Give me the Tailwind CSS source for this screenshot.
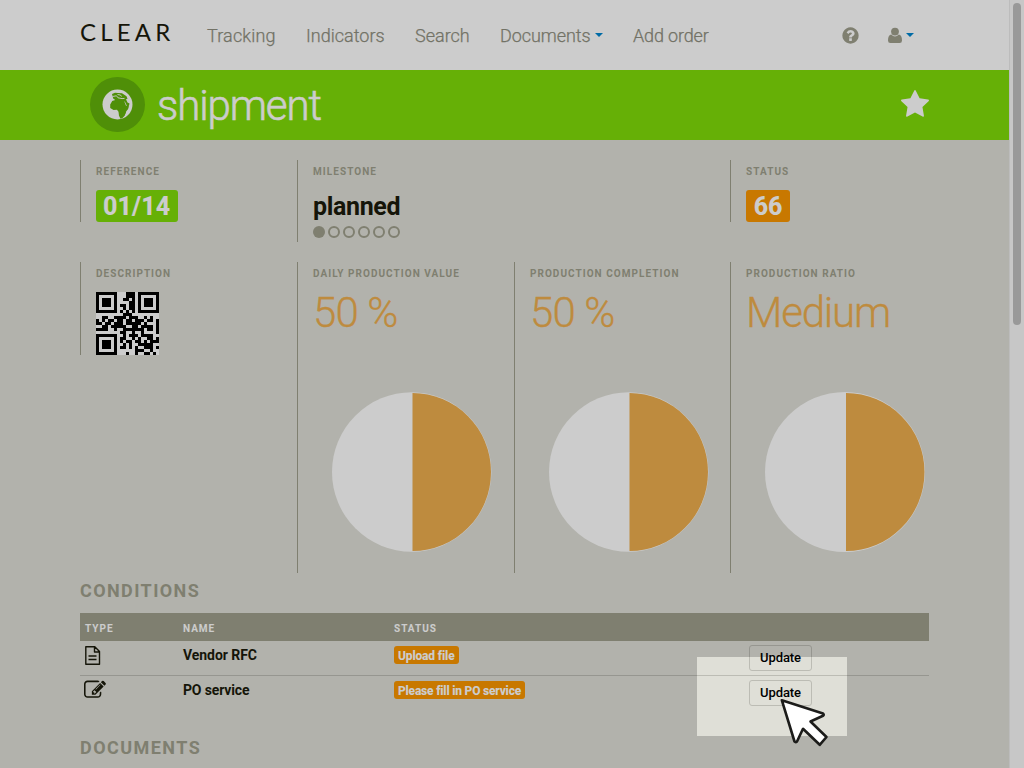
<!DOCTYPE html>
<html lang="en">
<head>
<meta charset="utf-8">
<title>CLEAR - shipment</title>
<script src="https://cdn.jsdelivr.net/npm/@tailwindcss/browser@4"></script>
</head>
<body class="relative h-[768px] w-[1024px] overflow-hidden bg-[#dfdfd7] font-['Roboto',sans-serif] text-[#1b1b0c]">
<div class="flex h-full">
<div class="w-[1009px] overflow-hidden">
  <nav class="flex h-[70px] bg-white pl-20 text-[18px] leading-[22px] font-light text-[#8f8f80] [-webkit-text-stroke:.25px]">
    <div class="w-[127px] pt-[17px] font-['Lato'] text-[24px] leading-[30px] font-normal tracking-[4.2px] text-[#1b1b0c] [-webkit-text-stroke:0]">CLEAR</div>
    <a class="w-[99px] pt-[25px] tracking-[.15px]">Tracking</a>
    <a class="w-[109px] pt-[25px]">Indicators</a>
    <a class="w-[85px] pt-[25px]">Search</a>
    <a class="flex w-[133px] gap-1 pt-[25px] tracking-[-.05px]">Documents<svg class="mt-2 h-1 w-2 fill-[#0086d0]" viewBox="0 0 8 4"><path d="M0 0h8L4 4z"/></svg></a>
    <a class="w-[208px] pt-[25px] tracking-[-.15px]">Add order</a>
    <svg class="mt-[26px] h-[19px] w-[19px] fill-[#9f9f8d]" viewBox="0 0 1792 1792"><path d="M1024 1376v-192q0-14-9-23t-23-9h-192q-14 0-23 9t-9 23v192q0 14 9 23t23 9h192q14 0 23-9t9-23zm256-672q0-88-55.500-163t-138.500-116-170-41q-243 0-371 213-15 24 8 42l132 100q7 6 19 6 16 0 25-12 53-68 86-92 34-24 86-24 48 0 85.500 26t37.500 59q0 38-20 61t-68 45q-63 28-115.500 86.500t-52.500 125.500v36q0 14 9 23t23 9h192q14 0 23-9t9-23q0-19 21.500-49.500t54.500-49.500q32-18 49-28.500t46-35 44.500-48 28-60.500 12.500-81zm384 192q0 209-103 385.500t-279.500 279.500-385.500 103-385.500-103-279.500-279.500-103-385.500 103-385.500 279.500-279.500 385.500-103 385.500 103 279.500 279.500 103 385.500z"/></svg>
    <svg class="mt-[27px] ml-7 h-4 w-[14px] fill-[#9f9f8d]" viewBox="0 0 14 16"><circle cx="7" cy="4.600" r="3.900"/><path d="M3.300 7.500Q5 9.400 7 9.400t3.700-1.900Q14 8 14 13.500q0 2.500-2.400 2.500H2.400Q0 16 0 13.500 0 8 3.300 7.500z"/></svg>
    <svg class="mt-[33px] ml-1 h-1 w-2 fill-[#0086d0]" viewBox="0 0 8 4"><path d="M0 0h8L4 4z"/></svg>
  </nav>
  <header class="flex h-[70px] bg-[#80dd08] pl-[90px] text-white">
    <div class="mt-[7px] flex h-[55px] w-[55px] items-center justify-center rounded-full bg-[#63b30a]">
      <svg class="h-[31px] w-[31px]" viewBox="0 0 31 31"><circle cx="15.500" cy="15.500" r="15" fill="#fff"/><path fill="#63b30a" d="M10 5 13 3.800l3 .2 4 .3 4.500 3 1 2.500-1.500.4 1.500 3.300 2 1-.5 2-1.500 1.800-2-4.500-1.500-2 2 5 3 .5-1 3-2.500 2.700-.5 3.300-2.500 2.700-2 .8-1.500-3-.5-4-1.500-2-3.500.3-3.300-2 0-3.500 2-3.700 3-1-2-1.500z"/><path fill="#63b30a" d="m22.800 22.500 1.700-1.500-.8 3.500-1.500.7z"/><path fill="none" stroke="#fff" stroke-width=".9" d="m10.500 7.500 4-.7 1.500 2 4 .8 2.500-.2M15.500 5.500l3 .5 1 1.500"/></svg>
    </div>
    <h1 class="ml-3 w-[744px] pt-[11px] text-[42px] leading-[49px] font-light tracking-[-1.1px] [-webkit-text-stroke:.6px]">shipment</h1>
    <svg class="mt-5 h-[28px] w-[28px] fill-white" viewBox="64 32 1664 1664"><path d="M1728 647q0 22-26 48l-363 354 86 500q1 7 1 20 0 21-10.500 35.500t-30.500 14.500q-19 0-40-12l-449-236-449 236q-22 12-40 12-21 0-31.500-14.500t-10.500-35.500q0-6 2-20l86-500-364-354q-25-27-25-48 0-37 56-46l502-73 225-455q19-41 49-41t49 41l225 455 502 73q56 9 56 46z"/></svg>
  </header>
  <main class="pl-20">
    <section class="mt-5 grid h-[102px] grid-cols-[217px_433px_200px] items-start text-[10px] leading-3 font-bold tracking-[1.06px] text-[#9f9f8d]">
      <div class="h-[62px] border-l border-[#9f9f8d] pt-[6px] pl-[15px]">REFERENCE
        <div class="mt-[12px] h-8 w-[82px] rounded-[3px] bg-[#80dd08] pl-[7px] text-[25px] leading-[34px] font-extrabold tracking-[.1px] text-white">01/14</div></div>
      <div class="h-[82px] border-l border-[#9f9f8d] pt-[6px] pl-[15px]">MILESTONE
        <div class="mt-[14px] text-[25px] leading-[30px] tracking-[-.35px] text-[#1b1b0c]">planned</div>
        <div class="mt-1 flex gap-[3px]"><i class="h-3 w-3 rounded-full bg-[#9f9f8d]"></i><i class="h-3 w-3 rounded-full border-2 border-[#9f9f8d]"></i><i class="h-3 w-3 rounded-full border-2 border-[#9f9f8d]"></i><i class="h-3 w-3 rounded-full border-2 border-[#9f9f8d]"></i><i class="h-3 w-3 rounded-full border-2 border-[#9f9f8d]"></i><i class="h-3 w-3 rounded-full border-2 border-[#9f9f8d]"></i></div></div>
      <div class="h-[62px] border-l border-[#9f9f8d] pt-[6px] pl-[15px]">STATUS
        <div class="mt-[12px] h-8 w-11 rounded-[3px] bg-[#fa9600] text-center text-[25px] leading-[34px] font-extrabold tracking-[-.2px] text-white">66</div></div>
    </section>
    <section class="grid h-[311px] grid-cols-[217px_217px_216px_200px] items-start text-[10px] leading-3 font-bold tracking-[1.04px] text-[#9f9f8d]">
      <div class="h-[93px] border-l border-[#9f9f8d] pt-[6px] pl-[15px]">DESCRIPTION
        <svg class="mt-[12px] h-[63px] w-[63px] bg-white" viewBox="0 0 21 21" shape-rendering="crispEdges"><path id="qr" fill="#000"/></svg></div>
      <div class="h-full border-l border-[#9f9f8d] pt-[6px] pl-[15px]">DAILY PRODUCTION VALUE
        <div class="mt-[8px] text-[42px] leading-[50px] font-light tracking-[-.9px] text-[#eeae4e] [-webkit-text-stroke:.3px]">50 %</div>
        <svg class="mt-[54px] ml-[19px] h-40 w-40" viewBox="0 0 160 160"><circle cx="79.700" cy="80" r="79.700" fill="#fff"/><path fill="#eeae4e" d="M80.500 1a78.500 79 0 0 1 0 158z"/></svg></div>
      <div class="h-full border-l border-[#9f9f8d] pt-[6px] pl-[15px]">PRODUCTION COMPLETION
        <div class="mt-[8px] text-[42px] leading-[50px] font-light tracking-[-.9px] text-[#eeae4e] [-webkit-text-stroke:.3px]">50 %</div>
        <svg class="mt-[54px] ml-[19px] h-40 w-40" viewBox="0 0 160 160"><circle cx="79.700" cy="80" r="79.700" fill="#fff"/><path fill="#eeae4e" d="M80.500 1a78.500 79 0 0 1 0 158z"/></svg></div>
      <div class="h-full border-l border-[#9f9f8d] pt-[6px] pl-[15px]">PRODUCTION RATIO
        <div class="mt-[8px] text-[42px] leading-[50px] font-light tracking-[-1.2px] text-[#eeae4e] [-webkit-text-stroke:.3px]">Medium</div>
        <svg class="mt-[54px] ml-[19px] h-40 w-40" viewBox="0 0 160 160"><circle cx="80" cy="80" r="80" fill="#fff"/><path fill="#eeae4e" d="M81 1a78.500 79 0 0 1 0 158z"/></svg></div>
    </section>
    <h2 class="h-10 pt-[7px] text-[18px] leading-[22px] font-bold tracking-[1.4px] text-[#9f9f8d]">CONDITIONS</h2>
    <div class="w-[849px] text-[14px] font-bold">
      <div class="grid h-7 grid-cols-[98px_211px_355px_1fr] bg-[#9f9f8d] pt-[10px] pl-[5px] text-[10px] leading-3 tracking-[1px] text-white"><span>TYPE</span><span>NAME</span><span>STATUS</span></div>
      <div class="grid h-[35px] grid-cols-[98px_211px_355px_1fr] items-start border-b border-[#bcbcb4] pl-[5px]">
        <svg class="mt-[5px] h-[19px] w-4 fill-none stroke-[#1b1b0c] stroke-[1.4]" viewBox="0 0 16 19"><path stroke-linejoin="round" d="M.8.8h9l4.700 4.800v12.600H.8zM9.500.8V6h5M3.500 10h8M3.500 13.500h8"/></svg>
        <span class="pt-[6px] leading-4 tracking-[-.05px]">Vendor RFC</span>
        <span class="mt-[5px] h-[18px] w-[65px] rounded-[3px] bg-[#fa9600] pl-1 text-[12px] leading-[20px] font-extrabold tracking-[-.15px] whitespace-nowrap text-white">Upload file</span>
        <span class="mt-1 h-[26px] w-[63px] rounded-[3px] border border-[#bcbcb4] text-center text-[13px] leading-[23px] font-medium tracking-[-.1px] text-black">Update</span>
      </div>
      <div class="grid h-[61px] grid-cols-[98px_211px_355px_1fr] items-start pl-[5px]">
        <svg class="mt-[3px] -ml-px h-[22px] w-[22px] fill-[#1b1b0c]" viewBox="0 0 1792 1792"><path d="M888 1184l116-116-152-152-116 116v56h96v96h56zm440-720q-16-16-33 1l-350 350q-17 17-1 33t33-1l350-350q17-17 1-33zm80 594v190q0 119-84.500 203.500t-203.500 84.500h-832q-119 0-203.500-84.500t-84.500-203.500v-832q0-119 84.500-203.500t203.500-84.500h832q63 0 117 25 15 7 18 23 3 17-9 29l-49 49q-14 14-32 8-23-6-45-6h-832q-66 0-113 47t-47 113v832q0 66 47 113t113 47h832q66 0 113-47t47-113v-126q0-13 9-22l64-64q15-15 35-7t20 29zm-96-738l288 288-672 672h-288v-288zm444 132l-92 92-288-288 92-92q28-28 68-28t68 28l152 152q28 28 28 68t-28 68z"/></svg>
        <span class="pt-[6px] leading-4 tracking-[-.15px]">PO service</span>
        <span class="mt-[5px] h-[18px] w-[131px] rounded-[3px] bg-[#fa9600] pl-1 text-[12px] leading-[20px] font-extrabold tracking-[-.2px] whitespace-nowrap text-white">Please fill in PO service</span>
        <span class="mt-1 h-[26px] w-[63px] rounded-[3px] border border-[#bcbcb4] text-center text-[13px] leading-[23px] font-medium tracking-[-.1px] text-black">Update</span>
      </div>
    </div>
    <h2 class="text-[18px] leading-[22px] font-bold tracking-[1.45px] text-[#9f9f8d]">DOCUMENTS</h2>
  </main>
</div>
<aside class="w-[15px] border-l border-[#ebebeb] bg-[#f9f9f9] pt-[3px] pl-[3px]"><div class="h-[322px] w-2 rounded-full bg-[#c0c0c0]"></div></aside>
</div>
<!-- spotlight and pointer -->
<div class="absolute top-[657px] left-[697px] h-[79px] w-[150px] shadow-[0_0_0_1200px_rgba(0,0,0,0.2)]"></div>
<svg class="absolute top-[696px] left-[778px] h-[54px] w-[54px]" viewBox="778 696 54 54"><path fill="#fff" stroke="#1c1c1a" stroke-width="2.600" stroke-linejoin="round" d="M781.800 700.200 823 713.500Q824.500 715 823 715.800L810.500 721.500 826.500 737 819.700 744.800 803 728.800 797 741.500Q795.500 742.800 794.500 741.500z"/></svg>
<script>
const rows=[
"#######...###.#######",
"#.....#...###.#.....#",
"#.###.#..##.#.#.###.#",
"#.###.#....##.#.###.#",
"#.###.#.##.##.#.###.#",
"#.....#..#.##.#.....#",
"#######.#.#.#.#######",
".........###.........",
"..##..####.###..#.#..",
"#.#.##.##.##.###.##.#",
"##.##.###.#####.#...#",
"..##.#####..##.####.#",
"####..#..#######.##.#",
"........##..#..#....#",
"#######..#.###.####..",
"#.....#.##..#.#..##.#",
"#.###.#.#.##.##.#.###",
"#.###.#..#.#..#####..",
"#.###.#.##.#.#..###.#",
"#.....#......###..#..",
"#######...#..#..##.#."];
let d="";
rows.forEach((r,y)=>[...r].forEach((c,x)=>{if(c==="#")d+=`M${x} ${y}h1v1h-1z`}));
document.getElementById("qr").setAttribute("d",d);
</script>
</body>
</html>
